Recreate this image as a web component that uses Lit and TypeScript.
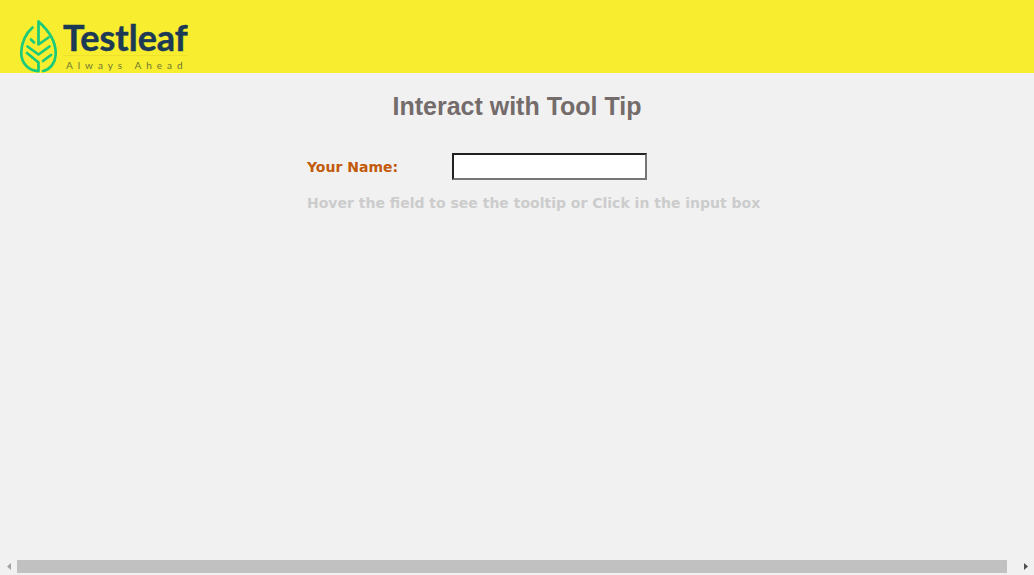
import { LitElement, html, css, svg } from "lit";
import { customElement } from "lit/decorators.js";

const leaf = svg`
  <path d="M32.500 27.500C26 33 21.200 43 21.200 53C21.500 64 29 70.500 38.500 71.200V62.500L27 53"/>
  <path d="M43 71C51 69 55.700 62 55.700 53C55.700 40 48 30 38.500 21.500V44.500L48.500 37.500"/>
  <path d="M31 39.500L34 42.500"/>
  <path d="M27.500 46.500L38.500 54.500L49.500 46.500"/>
  <path d="M43 61L51 55"/>`;

@customElement("site-logo")
class SiteLogo extends LitElement {
  static styles = css`
    :host { display: flex; gap: 6px; height: 53px; }
    .mark { width: 38px; height: 53px; flex: none; }
    .mark g { fill: none; stroke: #18ca79; stroke-width: 2.7; stroke-linecap: round; stroke-linejoin: round; }
    .words { display: flex; flex-direction: column; }
    .name { font: 700 36px/34px Lato, sans-serif; color: #1c3a55; -webkit-text-stroke: 0.5px #1c3a55; }
    .tag { font: 400 10px/18px Lato, sans-serif; letter-spacing: 5px; color: #6d7432; padding-left: 3px; margin-top: 1px; border-top: 1px solid #eee02e; white-space: nowrap; }
  `;
  render() {
    return html`
      <svg class="mark" viewBox="19 20 38 53" aria-hidden="true"><g>${leaf}</g></svg>
      <div class="words"><span class="name">Testleaf</span><span class="tag">Always Ahead</span></div>`;
  }
}

@customElement("scroll-strip")
class ScrollStrip extends LitElement {
  static styles = css`
    :host { display: flex; align-items: center; height: 17px; background: #f1f1f1; }
    button { display: flex; align-items: center; justify-content: center; width: 17px; height: 17px; padding: 0; border: 0; background: none; color: #505050; }
    button:disabled { color: #a3a3a3; }
    svg { width: 4px; height: 7px; fill: currentColor; }
    .track { flex: 1; padding-right: 10px; }
    .thumb { height: 13px; background: #c1c1c1; }
  `;
  render() {
    return html`
      <button disabled aria-label="Scroll left"><svg viewBox="0 0 4 7"><path d="M4 0V7L0 3.500Z"/></svg></button>
      <div class="track"><div class="thumb"></div></div>
      <button aria-label="Scroll right"><svg viewBox="0 0 4 7"><path d="M0 0V7L4 3.500Z"/></svg></button>`;
  }
}

@customElement("app-root")
class AppRoot extends LitElement {
  static styles = css`
    :host { display: flex; flex-direction: column; min-height: 100vh; background: #f1f1f1; font-family: "DejaVu Sans", sans-serif; }
    header { background: #f8ee2f; padding: 20px 19px 0; }
    main { flex: 1; }
    h1 { margin: 18px 0 0; text-align: center; font: 700 25px/30px "Liberation Sans", sans-serif; color: #746b6b; }
    form { width: 454px; margin: 32px auto 0; padding-left: 34px; box-sizing: content-box; }
    .row { display: grid; grid-template-columns: 145px 195px; align-items: center; }
    label, .hint { font-size: 14px; line-height: 18px; font-weight: 700; }
    label { color: #c25a09; }
    input { box-sizing: border-box; width: 100%; height: 27px; padding: 1px 4px; border: 2px solid; border-color: #222 #767676 #767676 #222; background: #fff; font: 14px "DejaVu Sans", sans-serif; outline: none; }
    .hint { margin: 14px 0 0; color: #ccc; white-space: nowrap; }
  `;
  render() {
    return html`
      <header><site-logo></site-logo></header>
      <main>
        <h1>Interact with Tool Tip</h1>
        <form @submit=${(e: Event) => e.preventDefault()}>
          <div class="row">
            <label for="name">Your Name:</label>
            <input id="name" type="text" title="Enter your Name">
          </div>
          <p class="hint">Hover the field to see the tooltip or Click in the input box</p>
        </form>
      </main>
      <scroll-strip></scroll-strip>`;
  }
}
